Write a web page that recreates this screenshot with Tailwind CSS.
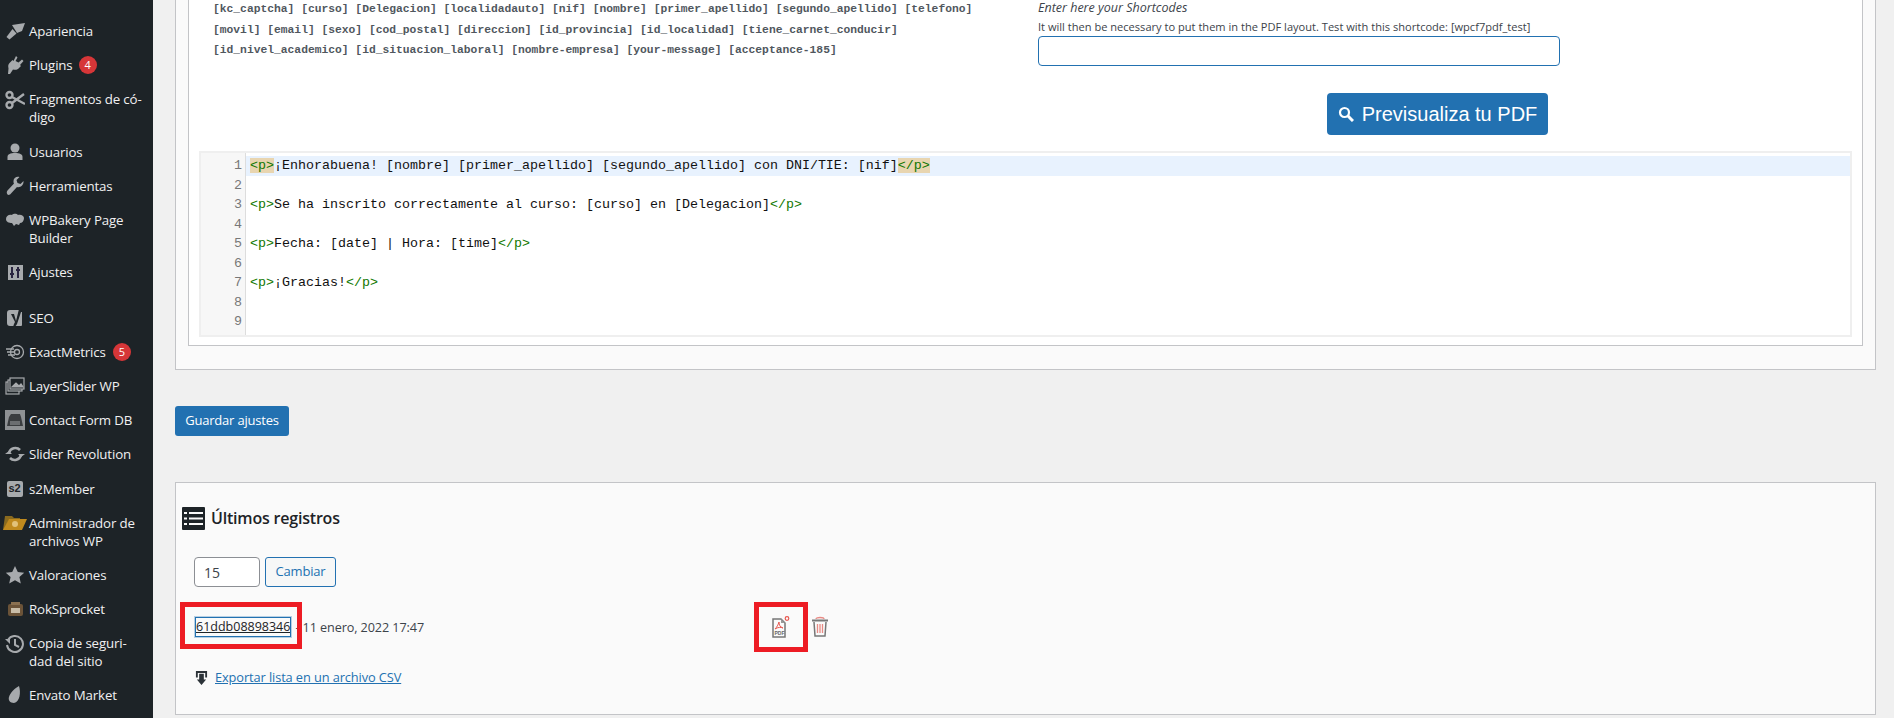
<!DOCTYPE html>
<html lang="es">
<head>
<meta charset="utf-8">
<script src="https://cdn.jsdelivr.net/npm/@tailwindcss/browser@4"></script>
</head>
<body class="m-0 h-[718px] w-[1894px] overflow-hidden bg-[#f0f0f0] font-['Open_Sans','Noto_Sans',sans-serif] text-[13px] text-[#3c434a]">
<div class="flex h-[718px] w-[1894px] overflow-hidden">
  <!-- Sidebar -->
  <nav class="h-full w-[153px] shrink-0 bg-[#1d2327] pt-[14px] text-[13.3px] leading-[18px] tracking-[-0.15px] text-[#f0f0f1]">
    <ul class="flex flex-col">
      <li class="flex h-[34px] items-center"><span class="flex w-[29px] justify-center"><svg class="h-[20px] w-[20px]" viewBox="0 0 20 20" fill="#a7aaad"><path d="M7 4l13-2-3 8-5 2z"/><path d="M7.500 8l4 4.500-7 6-3-2.500z"/></svg></span><span>Apariencia</span></li>
      <li class="flex h-[34px] items-center"><span class="flex w-[29px] justify-center"><svg class="h-[20px] w-[20px]" viewBox="0 0 20 20" fill="#a7aaad"><path d="M11 1l1.500 1.500-2 3.500 3 1.500 3.500-3L18.500 6l-3.500 4 1 1-3 3c-2 1-3.500 1-5 .5l-3 4.500H3l.5-5.500C3 11 3 9.500 4.500 8l3-3 1 1z"/></svg></span><span class="flex items-center">Plugins<span class="ml-[6px] flex h-[18px] w-[18px] items-center justify-center rounded-full bg-[#d63638] text-[11px] text-white">4</span></span></li>
      <li class="flex h-[53px] items-start pt-[8px]"><span class="flex w-[29px] justify-center"><svg class="h-[20px] w-[20px]" viewBox="0 0 20 20" fill="none" stroke="#a7aaad" stroke-width="2.400"><circle cx="4.500" cy="5" r="3"/><circle cx="4.500" cy="15" r="3"/><path d="M7 7l13 7M7 13L19 4"/></svg></span><span class="w-[120px]">Fragmentos de có-<br>digo</span></li>
      <li class="flex h-[34px] items-center"><span class="flex w-[29px] justify-center"><svg class="h-[20px] w-[20px]" viewBox="0 0 20 20" fill="#a7aaad"><circle cx="10" cy="6" r="4.500"/><path d="M2.500 18v-3c0-3 3-4 7.500-4s7.500 1 7.500 4v3z"/></svg></span><span>Usuarios</span></li>
      <li class="flex h-[34px] items-center"><span class="flex w-[29px] justify-center"><svg class="h-[20px] w-[20px]" viewBox="0 0 20 20" fill="#a7aaad"><path d="M18.500 5l-3 3-3-1-1-3 3-3c-3-1-6 1-6 4 0 1 0 2 .5 2.500l-6.500 7c-1 1-1 3 0 4s3 0 3.500-1l6-6.500c3 1 7-2 6.500-6z"/></svg></span><span>Herramientas</span></li>
      <li class="flex h-[52px] items-start pt-[8px]"><span class="flex w-[29px] justify-center"><svg class="h-[20px] w-[20px]" viewBox="0 0 20 20" fill="#a7aaad"><path d="M1 8c0-3 3-5 6-4 2-2 5-1 6 0 3-1 6 1 6 3 0 3-2 5-4 5l-1 2-3-1-2 2-2-3C4 12 1 11 1 8z"/></svg></span><span class="w-[120px]">WPBakery Page<br>Builder</span></li>
      <li class="flex h-[34px] items-center"><span class="flex w-[29px] justify-center"><svg class="h-[20px] w-[20px]" viewBox="0 0 20 20"><rect x="3" y="3" width="15" height="15" fill="#a7aaad"/><path d="M7 5v11M13 5v11M5 12h4M11 8h4" stroke="#2a2540" stroke-width="2"/></svg></span><span>Ajustes</span></li>
      <li class="mt-[12px] flex h-[34px] items-center"><span class="flex w-[29px] justify-center"><svg class="h-[20px] w-[20px]" viewBox="0 0 20 20"><path d="M2 5c0-2 1-3 3-3h11l-1 2h2v13c0 1-1 1-2 1H5c-2 0-3-1-3-3z" fill="#a7aaad"/><path d="M6 6h3l2 7 3-12h3l-5 15c-1 2-2 3-4 3l1-3 1-2z" fill="#1d2327"/></svg></span><span>SEO</span></li>
      <li class="flex h-[34px] items-center"><span class="flex w-[29px] justify-center"><svg class="h-[20px] w-[20px]" viewBox="0 0 20 20" fill="none" stroke="#a7aaad" stroke-width="1.300"><circle cx="12" cy="10" r="6.500"/><circle cx="12" cy="10" r="2.500"/><path d="M1 7h8M2 10h8M3 13h7"/></svg></span><span class="flex items-center">ExactMetrics<span class="ml-[7px] flex h-[18px] w-[18px] items-center justify-center rounded-full bg-[#d63638] text-[11px] text-white">5</span></span></li>
      <li class="flex h-[34px] items-center"><span class="flex w-[29px] justify-center"><svg class="h-[20px] w-[20px]" viewBox="0 0 20 20" fill="none" stroke="#a7aaad" stroke-width="1.200"><rect x="1" y="6" width="13" height="12"/><rect x="3" y="4" width="14" height="11" fill="#1d2327"/><rect x="5" y="2" width="14" height="11" fill="#1d2327"/><path d="M7 11l4-4 3 3 2-2 2 3z" fill="#a7aaad"/></svg></span><span>LayerSlider WP</span></li>
      <li class="flex h-[34px] items-center"><span class="flex w-[29px] justify-center"><svg class="h-[20px] w-[20px]" viewBox="0 0 20 20"><rect width="20" height="20" fill="#8e9194"/><path d="M4 7l2-3h9l1 3 2 9H2z" fill="#3a3d40"/><rect x="5" y="11" width="10" height="4" fill="#6b6e71"/></svg></span><span>Contact Form DB</span></li>
      <li class="flex h-[34px] items-center"><span class="flex w-[29px] justify-center"><svg class="h-[20px] w-[20px]" viewBox="0 0 20 20" fill="none" stroke="#a7aaad" stroke-width="2.600"><path d="M4 9a6.500 6.500 0 0 1 11-3M16 11a6.500 6.500 0 0 1-11 3"/><path d="M0 10l4-3 3 3zM20 10l-4 3-3-3z" fill="#a7aaad" stroke="none"/></svg></span><span>Slider Revolution</span></li>
      <li class="flex h-[35px] items-center"><span class="flex w-[29px] justify-center"><span class="flex h-[16px] w-[16px] items-center justify-center rounded-[2px] bg-[#a7aaad] font-['Liberation_Sans',sans-serif] text-[11px] leading-none font-bold text-[#1d2327]">s2</span></span><span>s2Member</span></li>
      <li class="flex h-[52px] items-start pt-[8px]"><span class="flex w-[29px] justify-center"><svg class="mt-[-2px] h-[20px] w-[24px]" viewBox="0 0 24 20"><path d="M2 4h7l2 2h6v2H6l-5 10H0z" fill="#8a6a1e"/><path d="M6 7h18l-5 11H0z" fill="#c08a1e"/><circle cx="12" cy="12" r="3" fill="#e2c27a"/></svg></span><span class="w-[120px]">Administrador de<br>archivos WP</span></li>
      <li class="flex h-[34px] items-center"><span class="flex w-[29px] justify-center"><svg class="h-[20px] w-[20px]" viewBox="0 0 20 20" fill="#a7aaad"><path d="M10 1l2.800 6 6.400.7-4.800 4.300 1.400 6.500L10 15.200 4.200 18.500l1.400-6.500L.8 7.700 7.200 7z"/></svg></span><span>Valoraciones</span></li>
      <li class="flex h-[34px] items-center"><span class="flex w-[29px] justify-center"><svg class="h-[20px] w-[20px]" viewBox="0 0 20 20"><rect x="3" y="5" width="15" height="12" rx="2" fill="#6b5338"/><rect x="6" y="3" width="9" height="3" fill="#8a7050"/><rect x="6" y="9" width="9" height="5" fill="#c9bda8"/></svg></span><span>RokSprocket</span></li>
      <li class="flex h-[52px] items-start pt-[8px]"><span class="flex w-[29px] justify-center"><svg class="h-[20px] w-[20px]" viewBox="0 0 20 20" fill="none" stroke="#a7aaad" stroke-width="2"><path d="M3 6a8 8 0 1 1-1 5"/><path d="M0 4l5 0 0 5z" fill="#a7aaad" stroke="none" transform="translate(0 1)"/><path d="M10 5v6l4 2"/></svg></span><span class="w-[120px]">Copia de seguri-<br>dad del sitio</span></li>
      <li class="flex h-[34px] items-center"><span class="flex w-[29px] justify-center"><svg class="h-[20px] w-[20px]" viewBox="0 0 20 20" fill="#a7aaad"><path d="M14 1c2 6 1 16-5 17-4 0-6-3-5-6 1-4 6-9 10-11z"/></svg></span><span>Envato Market</span></li>
    </ul>
  </nav>

  <!-- Main -->
  <main class="min-w-0 flex-1 pl-[22px] pr-[18px]">
    <!-- Top panel -->
    <section class="h-[370px] border border-t-0 border-[#c3c4c7] bg-[#fafafa] px-[12px]">
      <div class="h-[346px] border border-t-0 border-[#c3c4c7] bg-white px-[10px]">
        <div class="flex h-[151px]">
          <div class="w-[839px] pl-[14px] font-['Liberation_Mono',monospace] text-[11.300px] leading-[20.500px] font-bold whitespace-nowrap text-[#50575e]">
            <p class="mt-[-1px]">[kc_captcha] [curso] [Delegacion] [localidadauto] [nif] [nombre] [primer_apellido] [segundo_apellido] [telefono]</p>
            <p>[movil] [email] [sexo] [cod_postal] [direccion] [id_provincia] [id_localidad] [tiene_carnet_conducir]</p>
            <p>[id_nivel_academico] [id_situacion_laboral] [nombre-empresa] [your-message] [acceptance-185]</p>
          </div>
          <div class="w-[523px] shrink-0">
            <p class="text-[12.500px] leading-[16px] italic">Enter here your Shortcodes</p>
            <p class="mt-[4px] text-[11.080px] leading-[14px] whitespace-nowrap">It will then be necessary to put them in the PDF layout. Test with this shortcode: [wpcf7pdf_test]</p>
            <div class="mt-[2px] h-[30px] w-[522px] rounded-[4px] border border-[#2271b1] bg-white"></div>
            <div class="mt-[27px] flex justify-end pr-[13px]">
              <button class="flex h-[42px] w-[221px] items-center justify-center gap-[8px] rounded-[4px] bg-[#2271b1] font-['Liberation_Sans',sans-serif] text-[20px] text-white">
                <svg class="h-[16px] w-[16px]" viewBox="0 0 16 16" fill="none" stroke="#fff"><circle cx="6.500" cy="6.500" r="4.500" stroke-width="2.200"/><path d="M10 10l5 5" stroke-width="3"/></svg>
                <span>Previsualiza tu PDF</span>
              </button>
            </div>
          </div>
        </div>
        <!-- Code editor -->
        <div class="flex h-[186px] border-2 border-[#efefef] bg-white font-['Liberation_Mono',monospace] text-[13.330px] leading-[19.500px] text-[#111]">
          <div class="w-[45px] shrink-0 border-r border-[#ddd] bg-[#f7f7f7] pt-[3px] pr-[3px] text-right text-[#777]">
            <p>1</p><p>2</p><p>3</p><p>4</p><p>5</p><p>6</p><p>7</p><p>8</p><p>9</p>
          </div>
          <div class="min-w-0 flex-1 pt-[3px]">
            <p class="bg-[#e8f2fe] pl-[4px] whitespace-pre"><span class="bg-[#e8d5b0] text-[#117700]">&lt;p&gt;</span>¡Enhorabuena! [nombre] [primer_apellido] [segundo_apellido] con DNI/TIE: [nif]<span class="bg-[#e8d5b0] text-[#117700]">&lt;/p&gt;</span></p>
            <p>&nbsp;</p>
            <p class="pl-[4px] whitespace-pre"><span class="text-[#117700]">&lt;p&gt;</span>Se ha inscrito correctamente al curso: [curso] en [Delegacion]<span class="text-[#117700]">&lt;/p&gt;</span></p>
            <p>&nbsp;</p>
            <p class="pl-[4px] whitespace-pre"><span class="text-[#117700]">&lt;p&gt;</span>Fecha: [date] | Hora: [time]<span class="text-[#117700]">&lt;/p&gt;</span></p>
            <p>&nbsp;</p>
            <p class="pl-[4px] whitespace-pre"><span class="text-[#117700]">&lt;p&gt;</span>¡Gracias!<span class="text-[#117700]">&lt;/p&gt;</span></p>
          </div>
        </div>
      </div>
    </section>

    <button class="mt-[36px] block h-[30px] w-[114px] rounded-[3px] bg-[#2271b1] text-[13px] tracking-[-0.2px] text-white">Guardar ajustes</button>

    <!-- Registros -->
    <section class="mt-[46px] h-[233px] border border-[#c3c4c7] bg-[#fafafa] pt-[24px] pl-[6px]">
      <div class="flex items-center gap-[6px]">
        <svg class="h-[23px] w-[23px]" viewBox="0 0 23 23"><rect width="23" height="23" rx="1" fill="#1d2327"/><path d="M2 6h3M7 6h14M2 11.500h3M7 11.500h14M2 17h3M7 17h14" stroke="#fafafa" stroke-width="2"/></svg>
        <h2 class="text-[16px] leading-[23px] font-semibold tracking-[-0.2px] text-[#1d2327]">Últimos registros</h2>
      </div>
      <div class="mt-[27px] ml-[12px] flex gap-[5px]">
        <div class="flex h-[30px] w-[66px] items-center rounded-[4px] border border-[#8c8f94] bg-white pl-[9px] text-[14px]">15</div>
        <button class="h-[30px] w-[71px] rounded-[3px] border border-[#2271b1] bg-[#f6f7f7] text-[13px] tracking-[-0.2px] text-[#2271b1]">Cambiar</button>
      </div>
      <div class="relative mt-[15px] flex h-[50px] items-center">
        <span class="relative z-10 ml-[14px] h-[18px] text-[12.500px] leading-[18px] text-[#1d2327] underline outline outline-1 outline-[#2271b1] shadow-[0_0_0_2px_rgba(34,113,177,0.3)]">61ddb08898346</span>
        <span class="ml-[5px] text-[12.650px] tracking-[-0.1px]">- 11 enero, 2022 17:47</span>
        <span class="absolute top-0 left-[-2px] h-[47px] w-[122px] border-[5px] border-[#ed1c24]"></span>
        <span class="absolute top-0 left-[572px] flex h-[50px] w-[54px] items-center justify-center border-[5px] border-[#ed1c24]">
          <svg class="h-[24px] w-[22px]" viewBox="0 0 22 24" fill="none"><path d="M3 4h8l4 4v14H3z" stroke="#777" stroke-width="1.500"/><path d="M11 4l4 4h-4z" fill="#999"/><path d="M9 7c-1 3-2 5-4 7 3-2 6-2 8-1-3-1-4-3-4-6z" stroke="#e8574f" stroke-width="1"/><circle cx="17" cy="3.500" r="1.800" stroke="#e8574f" stroke-width="1.200"/><text x="4.500" y="20" font-size="5" font-weight="700" fill="#666" font-family="Liberation Sans, sans-serif">PDF</text></svg>
        </span>
        <span class="absolute top-[14px] left-[628px]">
          <svg class="h-[22px] w-[20px]" viewBox="0 0 20 22" fill="none"><path d="M6 3c0-2 8-2 8 0" stroke="#e88b85" stroke-width="1.300"/><path d="M2 4.500h16" stroke="#777" stroke-width="2"/><path d="M4 6l1 14h10l1-14" stroke="#777" stroke-width="1.500"/><path d="M7.500 8v9M10 8v9M12.500 8v9" stroke="#e88b85" stroke-width="1.300"/></svg>
        </span>
      </div>
      <div class="mt-[16px] ml-[13px] flex items-center gap-[7px]">
        <svg class="h-[18px] w-[13px]" viewBox="0 0 14 17" fill="#2c3338"><path d="M1 1h12v7h-2V3H3v5H1z"/><path d="M4.500 4h5v6H12l-5 6-5-6h2.500z"/></svg>
        <a class="text-[12.800px] tracking-[-0.1px] text-[#2271b1] underline">Exportar lista en un archivo CSV</a>
      </div>
    </section>
  </main>
</div>
</body>
</html>
